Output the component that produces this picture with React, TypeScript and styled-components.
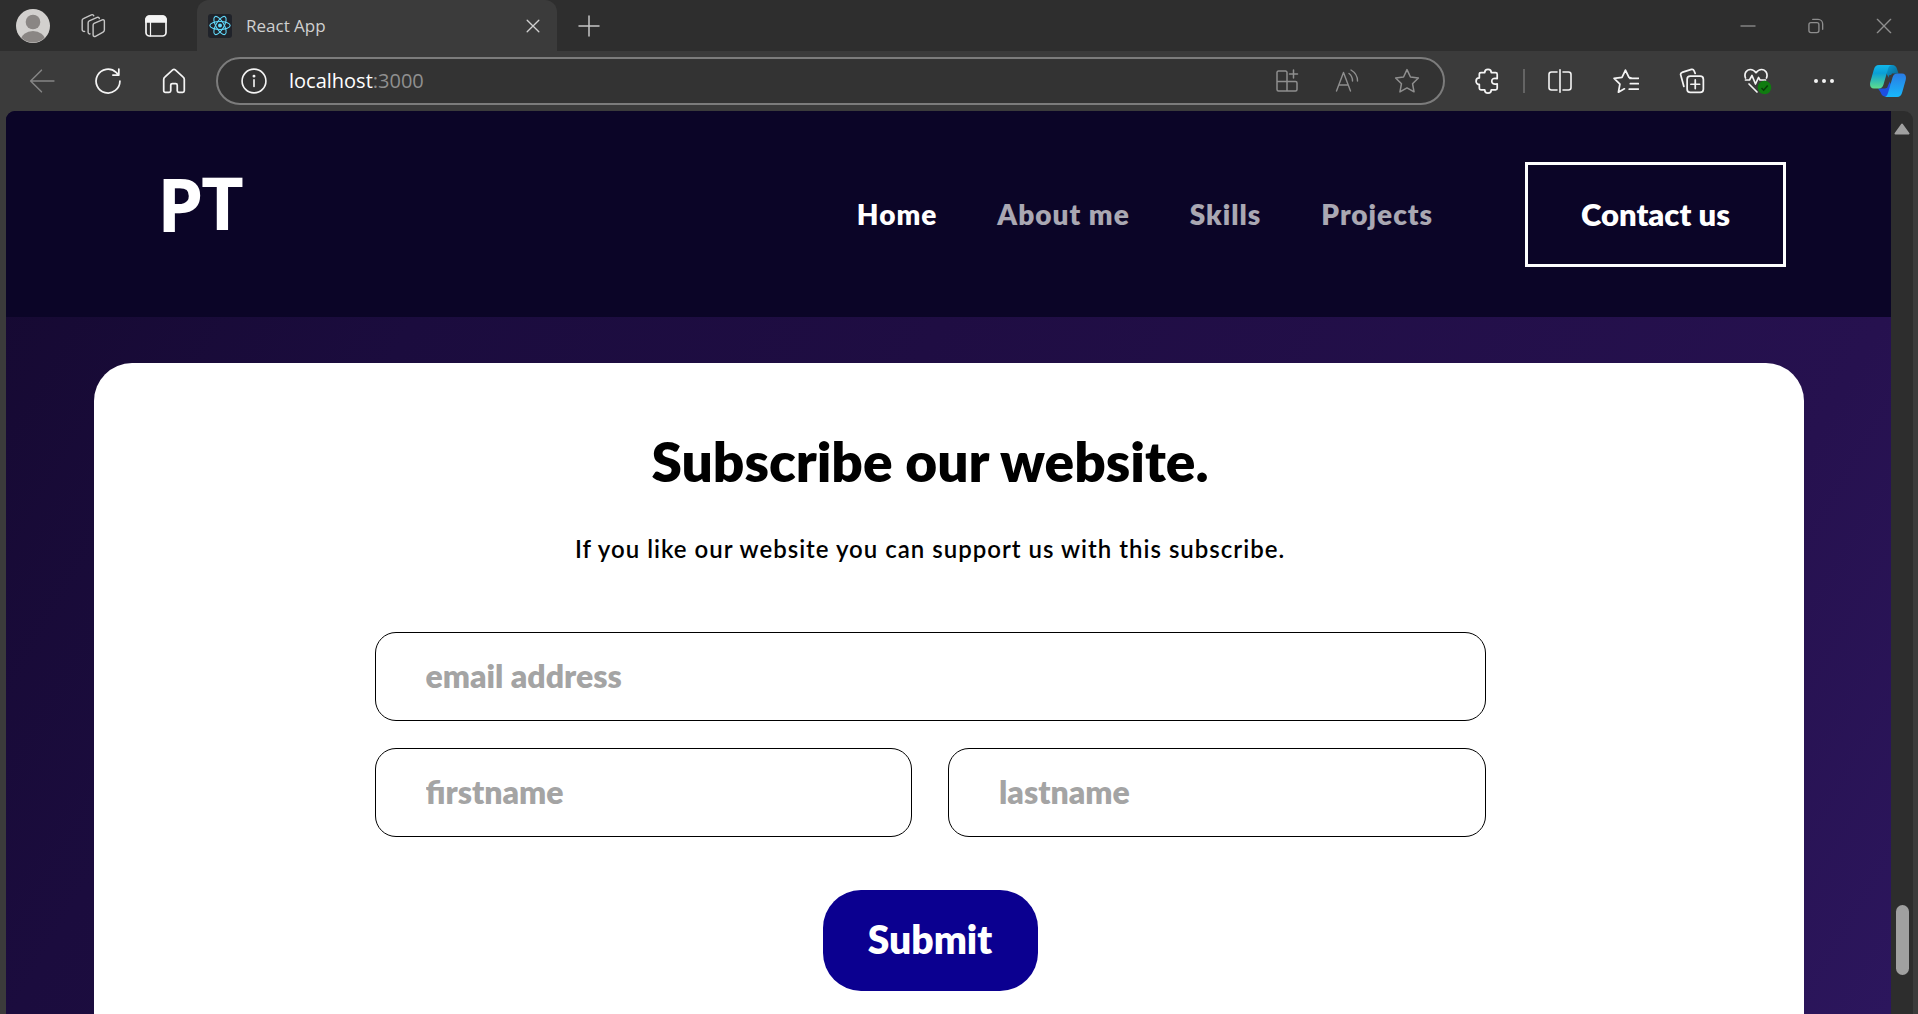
import React from 'react';
import styled, { createGlobalStyle } from 'styled-components';

const GlobalStyle = createGlobalStyle`
  *, *::before, *::after { box-sizing: border-box; }
  html, body { margin: 0; background: #3b3b3b; }
  button, input { font: inherit; color: inherit; }
`;

const siteFont = 'Lato, "Open Sans", sans-serif';
const chromeFont = '"Open Sans", "Noto Sans", sans-serif';

const Browser = styled.div`
  display: flex;
  flex-direction: column;
  height: 100vh;
  overflow: hidden;
  background: #3b3b3b;
  font-family: ${chromeFont};
`;

const TabStrip = styled.div`
  display: flex;
  align-items: center;
  height: 51px;
  flex: none;
  background: #2e2e2e;
`;

const IconButton = styled.button<{ $width?: number; $color?: string }>`
  display: flex;
  align-items: center;
  justify-content: center;
  flex: none;
  width: ${(p) => p.$width ?? 66}px;
  height: 48px;
  padding: 0;
  border: 0;
  background: none;
  color: ${(p) => p.$color ?? '#f4f4f4'};
  svg { display: block; }
`;

const StripStart = styled.div`
  display: flex;
  width: 197px;
  padding-left: 3px;
`;

const Tab = styled.div`
  display: flex;
  align-items: center;
  width: 360px;
  height: 51px;
  padding: 0 4px 0 11px;
  border-radius: 12px 12px 0 0;
  background: #3b3b3b;
  color: #d0d0d0;
  font-size: 17px;
  line-height: 24px;
`;

const TabTitle = styled.span`
  flex: 1;
  padding-left: 14px;
`;

const WindowControls = styled.div`
  display: flex;
  margin-left: auto;
`;

const Toolbar = styled.div`
  display: flex;
  align-items: center;
  height: 60px;
  flex: none;
  padding-left: 9px;
`;

const AddressBar = styled.div`
  display: flex;
  align-items: center;
  flex: 1;
  height: 48px;
  margin: 0 10px 0 9px;
  padding: 0 6px;
  border: 2px solid #7c7c7c;
  border-radius: 24px;
  background: #333333;
`;

const Address = styled.div`
  flex: 1;
  padding-left: 5px;
  font-size: 20px;
  line-height: 28px;
  color: #ffffff;
`;

const Port = styled.span`
  color: #8f8f8f;
`;

const Divider = styled.span`
  width: 2px;
  height: 24px;
  margin: 0 2px;
  background: #646464;
`;

const Viewport = styled.div`
  display: flex;
  flex: 1;
  min-height: 0;
  margin: 0 5px 0 6px;
  border-radius: 9px 9px 0 0;
  overflow: hidden;
`;

const Page = styled.div`
  flex: 1;
  min-width: 0;
  overflow: hidden;
  background: linear-gradient(120deg, #150930 0%, #1b0c3e 22%, #1f0d43 44%, #26114f 83%, #2c165d 100%);
  font-family: ${siteFont};
`;

const Header = styled.header`
  display: flex;
  align-items: center;
  height: 206px;
  padding: 0 105px 0 151px;
  background: #0b0527;
`;

const Nav = styled.nav`
  display: flex;
  gap: 60px;
  margin-left: auto;
`;

const NavLink = styled.a<{ $active?: boolean }>`
  color: #ffffff;
  opacity: ${(p) => (p.$active ? 1 : 0.65)};
  font-size: 28px;
  line-height: 36px;
  font-weight: 800;
  letter-spacing: 1px;
  text-decoration: none;
`;

const ContactButton = styled.button`
  width: 261px;
  height: 105px;
  margin-left: 92px;
  padding: 0;
  border: 3px solid #ffffff;
  background: transparent;
  color: #ffffff;
  font-size: 31px;
  line-height: 40px;
  font-weight: 800;
`;

const Card = styled.main`
  display: flex;
  flex-direction: column;
  align-items: center;
  margin: 46px 87px 0 88px;
  padding: 62px 38px 96px 0;
  border-radius: 38px;
  background: #ffffff;
  color: #000000;
`;

const Title = styled.h1`
  margin: 0;
  font-size: 55px;
  line-height: 72px;
  font-weight: 800;
`;

const Lead = styled.p`
  margin: 34px 0 0;
  font-size: 24px;
  line-height: 36px;
  font-weight: 600;
  letter-spacing: 1px;
`;

const Form = styled.form`
  display: grid;
  grid-template-columns: 1fr 1fr;
  gap: 27px 36px;
  width: 100%;
  max-width: 1111px;
  margin-top: 65px;
`;

const Field = styled.input<{ $wide?: boolean }>`
  grid-column: ${(p) => (p.$wide ? '1 / -1' : 'auto')};
  min-width: 0;
  height: 89px;
  padding: 0 50px 2px;
  border: 1px solid #000000;
  border-radius: 21px;
  background: #ffffff;
  color: #000000;
  font-size: 32px;
  line-height: 40px;
  font-weight: 800;
  &::placeholder { color: #a4a4a4; opacity: 1; }
`;

const Submit = styled.button`
  grid-column: 1 / -1;
  justify-self: center;
  width: 215px;
  height: 101px;
  margin-top: 26px;
  padding: 0 0 4px;
  border: 0;
  border-radius: 38px;
  background: #0b0090;
  color: #ffffff;
  font-size: 39px;
  line-height: 48px;
  font-weight: 800;
`;

const Scrollbar = styled.div`
  display: flex;
  flex-direction: column;
  align-items: center;
  width: 22px;
  padding: 12px 0 39px;
  background: #2d2d2d;
`;

const Thumb = styled.div`
  width: 13px;
  height: 70px;
  margin-top: auto;
  border-radius: 7px;
  background: #a0a0a0;
`;

type GlyphProps = { size?: number; weight?: number; children: React.ReactNode };

const Glyph = ({ size = 24, weight = 1.6, children }: GlyphProps) => (
  <svg width={size} height={size} viewBox="0 0 24 24" fill="none" stroke="currentColor"
    strokeWidth={weight} strokeLinecap="round" strokeLinejoin="round" aria-hidden="true">
    {children}
  </svg>
);

const Avatar = () => (
  <svg width="34" height="34" viewBox="0 0 34 34" aria-hidden="true">
    <clipPath id="face"><circle cx="17" cy="17" r="16.5" /></clipPath>
    <circle cx="17" cy="17" r="17" fill="#d2d0ce" />
    <g clipPath="url(#face)" fill="#8a8684">
      <circle cx="17" cy="13" r="7.3" />
      <ellipse cx="17" cy="31" rx="12" ry="9" />
    </g>
  </svg>
);

const ReactMark = () => (
  <svg width="24" height="24" viewBox="0 0 24 24" aria-hidden="true">
    <rect width="24" height="24" rx="3" fill="#20232a" />
    <g fill="none" stroke="#61dafb" strokeWidth="1.1">
      <ellipse cx="12" cy="11.5" rx="10.2" ry="4" />
      <ellipse cx="12" cy="11.5" rx="10.2" ry="4" transform="rotate(60 12 11.5)" />
      <ellipse cx="12" cy="11.5" rx="10.2" ry="4" transform="rotate(120 12 11.5)" />
    </g>
    <circle cx="12" cy="11.5" r="2" fill="#61dafb" />
  </svg>
);

const Copilot = () => (
  <svg width="36" height="32" viewBox="0 0 36 32" aria-hidden="true">
    <defs>
      <linearGradient id="cpA" x1="0" y1="0" x2="0" y2="1">
        <stop offset="0" stopColor="#12b7ea" />
        <stop offset=".35" stopColor="#0a9fd6" />
        <stop offset="1" stopColor="#5fdd8c" />
      </linearGradient>
      <linearGradient id="cpB" x1="0" y1="0" x2="0" y2="1">
        <stop offset="0" stopColor="#2a7be4" />
        <stop offset="1" stopColor="#18b8fb" />
      </linearGradient>
      <linearGradient id="cpC" x1="0" y1="0" x2="1" y2="1">
        <stop offset="0" stopColor="#0aa5e0" />
        <stop offset="1" stopColor="#0b5f86" />
      </linearGradient>
    </defs>
    <path d="M17 0h5c3 0 4.400 1.500 5.200 4.500L28.500 8.500H22l-3 5-5-10z" fill="url(#cpC)" />
    <path d="M8 23.500h7.500l3.500-8 3 6-3.500 10h-3c-2.600 0-4-1.400-4.800-4z" fill="#1d4fe0" />
    <path d="M19.500 10h3L17 23h-3.500z" fill="#3b3b3b" />
    <path d="M9 0h13c-2 0-3.200 1.500-4 4l-4.500 15.500c-.8 2.700-2.200 4-4.700 4H4c-3.500 0-4.500-3-3.700-6.500L3.700 5C4.600 1.700 6 0 9 0z" fill="url(#cpA)" />
    <path d="M27 32H14c2 0 3.200-1.500 4-4l4.500-15.500c.8-2.700 2.200-4 4.700-4H32c3.500 0 4.500 3 3.700 6.500L32.300 27c-.9 3.300-2.300 5-5.300 5z" fill="url(#cpB)" />
  </svg>
);

const Logo = () => (
  <svg width="92" height="128" viewBox="0 0 92 128" role="img" aria-label="PT"
    fontFamily='"Open Sans", sans-serif' fontSize="74" fontWeight="700" fill="#ffffff">
    <text x="0" y="82">P</text>
    <text x="44" y="80">T</text>
  </svg>
);

const navItems = ['Home', 'About me', 'Skills', 'Projects'];

export default function App() {
  return (
    <Browser>
      <GlobalStyle />
      <TabStrip>
        <StripStart>
          <IconButton $width={60} aria-label="Profile"><Avatar /></IconButton>
          <IconButton $width={60} $color="#c6c6c6" aria-label="Workspaces">
            <Glyph size={26} weight={1.3}>
              <path d="M13 9.500l7.500-3.200c1-.4 2 .2 2 1.300v8.200c0 .8-.5 1.500-1.200 1.900l-7 3.800c-1 .5-2.200-.1-2.200-1.300V11c0-.7.300-1.200.9-1.500z" />
              <path d="M9.300 19.300c-1 .1-1.800-.5-1.800-1.600V9c0-.8.400-1.400 1.100-1.700l7.200-3.200c.9-.4 2 0 2 1" />
              <path d="M4.300 17c-1.300.2-2.300-.5-2.300-1.800V6.800c0-.8.400-1.400 1.100-1.700l7.400-3.400c.9-.4 2 0 2.200.8" />
            </Glyph>
          </IconButton>
          <IconButton $width={66} aria-label="Tab actions">
            <Glyph size={24} weight={1.7}>
              <rect x="2" y="2" width="20" height="20" rx="3.500" />
              <path d="M2 8V5.500A3.500 3.500 0 0 1 5.500 2h13A3.500 3.500 0 0 1 22 5.500V8z" fill="currentColor" />
              <path d="M6.500 8v14" strokeWidth="1.200" />
            </Glyph>
          </IconButton>
        </StripStart>
        <Tab>
          <ReactMark />
          <TabTitle>React App</TabTitle>
          <IconButton $width={40} $color="#d0d0d0" aria-label="Close tab">
            <Glyph size={20}><path d="M5 5l14 14M19 5L5 19" /></Glyph>
          </IconButton>
        </Tab>
        <IconButton $width={64} $color="#c6c6c6" aria-label="New tab">
          <Glyph weight={1.5}><path d="M12 2v20M2 12h20" /></Glyph>
        </IconButton>
        <WindowControls>
          <IconButton $width={68} $color="#8e8e8e" aria-label="Minimize">
            <Glyph size={20}><path d="M3 12h18" strokeLinecap="butt" /></Glyph>
          </IconButton>
          <IconButton $width={68} $color="#8e8e8e" aria-label="Restore">
            <Glyph size={20}>
              <rect x="3.500" y="8" width="12" height="12" rx="2.500" />
              <path d="M8 4h6.500A5.500 5.500 0 0 1 20 9.500V16" />
            </Glyph>
          </IconButton>
          <IconButton $width={68} $color="#8e8e8e" aria-label="Close">
            <Glyph size={20}><path d="M4 4l16 16M20 4L4 20" /></Glyph>
          </IconButton>
        </WindowControls>
      </TabStrip>

      <Toolbar>
        <IconButton $color="#858585" aria-label="Back">
          <Glyph size={26} weight={1.4}><path d="M23 12H1.500M11.500 2L1.500 12l10 10" /></Glyph>
        </IconButton>
        <IconButton aria-label="Refresh">
          <Glyph size={26} weight={1.6}><path d="M23 12a11 11 0 1 1-3.500-8l2.500 2.500M22 1v5.500h-5.500" /></Glyph>
        </IconButton>
        <IconButton aria-label="Home">
          <Glyph size={26}>
            <path d="M2.500 10.500c0-.8.300-1.500 1-2.100l7.300-6.600c.7-.6 1.700-.6 2.400 0l7.300 6.600c.7.600 1 1.300 1 2.100V21c0 .8-.7 1.500-1.500 1.500h-3.500c-.8 0-1.500-.7-1.500-1.500v-5c0-.8-.7-1.500-1.500-1.500h-3c-.8 0-1.500.7-1.500 1.500v5c0 .8-.7 1.500-1.500 1.500H4c-.8 0-1.500-.7-1.500-1.500z" />
          </Glyph>
        </IconButton>
        <AddressBar>
          <IconButton $width={60} aria-label="Site information">
            <Glyph size={26} weight={1.5}>
              <circle cx="12" cy="12" r="11" />
              <path d="M12 11v6" />
              <circle cx="12" cy="7.500" r=".6" fill="currentColor" />
            </Glyph>
          </IconButton>
          <Address>localhost<Port>:3000</Port></Address>
          <IconButton $width={60} $color="#8f8f8f" aria-label="Install app">
            <Glyph weight={1.5}>
              <path d="M11 2H3.500C2.700 2 2 2.700 2 3.500v17c0 .8.700 1.500 1.500 1.500h17c.8 0 1.500-.7 1.500-1.500V14c0-.8-.7-1.500-1.500-1.500H2M12 22V3.500C12 2.700 11.300 2 10.500 2M18.500 1v8M14.500 5h8" />
            </Glyph>
          </IconButton>
          <IconButton $width={60} $color="#8f8f8f" aria-label="Read aloud">
            <Glyph weight={1.4}>
              <path d="M1.500 22L8.500 3.500 15.500 22M4 16h9M14 4.500c2.200 1.600 3.500 4.300 3.500 7.500M16 1c4 2.300 6.500 6.500 6.500 11" />
            </Glyph>
          </IconButton>
          <IconButton $width={60} $color="#8f8f8f" aria-label="Add to favorites">
            <Glyph size={26} weight={1.4}>
              <path d="M12 1.500l3.200 6.800 7.300 1-5.400 5.200 1.400 7.500L12 18.400 5.500 22l1.400-7.500L1.500 9.300l7.300-1z" />
            </Glyph>
          </IconButton>
        </AddressBar>
        <IconButton aria-label="Extensions">
          <Glyph size={26}>
            <path d="M9 4.200a3 3 0 0 1 6 0h4c.8 0 1.500.7 1.500 1.500v4.100c-4-.8-5 .6-5 2.400s1 3.200 5 2.400v4.100c0 .8-.7 1.500-1.500 1.500h-4a3 3 0 0 1-6 0H5.500c-.8 0-1.500-.7-1.500-1.500v-3.500a3 3 0 0 1 0-6V5.700c0-.8.700-1.500 1.500-1.500z" />
          </Glyph>
        </IconButton>
        <Divider />
        <IconButton aria-label="Split screen">
          <Glyph>
            <path d="M9 3H3.500C2.100 3 1 4.100 1 5.500v13C1 19.900 2.100 21 3.500 21H9M15 3h5.500C21.900 3 23 4.100 23 5.500v13c0 1.400-1.100 2.500-2.500 2.500H15M12 .8v22.400" />
          </Glyph>
        </IconButton>
        <IconButton aria-label="Favorites">
          <Glyph size={26}>
            <path d="M17 9.200l-2.300-.6-3.200-6.700-3.200 6.700-7.300 1 5.400 5.200-1.400 7.500 5.500-3.100M15.500 9.500H23.500M16 14.500H23.500M15 19.500h8.500" />
          </Glyph>
        </IconButton>
        <IconButton aria-label="Collections">
          <Glyph size={26}>
            <path d="M4.500 17L1.600 6.500c-.3-1 .2-2 1.200-2.400L11.500 1.300c1-.3 2 .2 2.400 1.200l1 2.500" />
            <rect x="7.500" y="7.500" width="15" height="15" rx="3" />
            <path d="M15 11v8M11 15h8" />
          </Glyph>
        </IconButton>
        <IconButton aria-label="Browser essentials">
          <svg width="28" height="28" viewBox="1 0 28 28" fill="none" aria-hidden="true">
            <g stroke="currentColor" strokeWidth="1.700" strokeLinecap="round" strokeLinejoin="round">
              <path d="M2.500 11C.8 6.500 3.500 2.500 7.500 2.500c2.300 0 4 1.200 5.500 3.200 1.500-2 3.200-3.200 5.500-3.200 4 0 6.700 4 5 8.500" />
              <path d="M2.500 13h4l2.500-4.500 3.500 8.500 3-6.500 1.500 2.500h5.500M6 17l8 8" />
            </g>
            <circle cx="21.500" cy="20.500" r="6.800" fill="#107c10" />
            <path d="M18.500 21l2.200 2.200 4-4.700" stroke="#0a3d0a" strokeWidth="1.500" />
          </svg>
        </IconButton>
        <IconButton aria-label="Settings and more">
          <Glyph>
            <g fill="currentColor" stroke="none">
              <circle cx="4" cy="12" r="2" /><circle cx="12" cy="12" r="2" /><circle cx="20" cy="12" r="2" />
            </g>
          </Glyph>
        </IconButton>
        <IconButton $width={61} aria-label="Copilot"><Copilot /></IconButton>
      </Toolbar>

      <Viewport>
        <Page>
          <Header>
            <Logo />
            <Nav>
              {navItems.map((item, i) => (
                <NavLink key={item} href="#" $active={i === 0}>{item}</NavLink>
              ))}
            </Nav>
            <ContactButton type="button">Contact us</ContactButton>
          </Header>
          <Card>
            <Title>Subscribe our website.</Title>
            <Lead>If you like our website you can support us with this subscribe.</Lead>
            <Form>
              <Field $wide type="email" placeholder="email address" aria-label="email address" />
              <Field type="text" placeholder="firstname" aria-label="firstname" />
              <Field type="text" placeholder="lastname" aria-label="lastname" />
              <Submit type="button">Submit</Submit>
            </Form>
          </Card>
        </Page>
        <Scrollbar>
          <svg width="16" height="12" viewBox="0 0 16 12" aria-hidden="true">
            <path d="M8 1.500L14.500 10.500h-13z" fill="#a0a0a0" stroke="#a0a0a0" strokeWidth="2" strokeLinejoin="round" />
          </svg>
          <Thumb />
        </Scrollbar>
      </Viewport>
    </Browser>
  );
}
